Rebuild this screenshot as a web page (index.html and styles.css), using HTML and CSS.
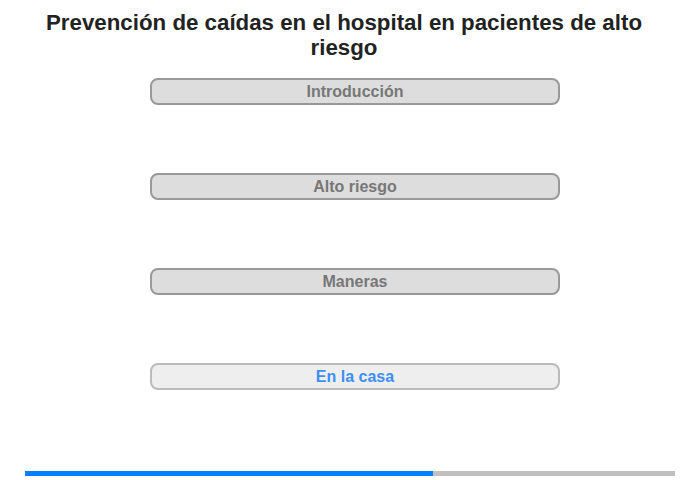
FILE: index.html
```html
<!DOCTYPE html>
<html lang="es">
<head>
  <meta charset="UTF-8">
  <meta name="viewport" content="width=device-width, initial-scale=1.0">
  <title>Prevención de caídas</title>
  <link rel="stylesheet" href="styles.css">
</head>
<body>
  <div class="page">
    <h1 class="title">Prevención de caídas en el hospital en pacientes de alto riesgo</h1>

    <div class="menu">
      <button class="menu-item">Introducción</button>
      <button class="menu-item">Alto riesgo</button>
      <button class="menu-item">Maneras</button>
      <button class="menu-item current">En la casa</button>
    </div>

    <div class="progress">
      <div class="progress-fill" style="width: 62.75%"></div>
    </div>
  </div>
</body>
</html>
```

FILE: styles.css
```css
body {
  margin: 0;
  background-color: #fff;
  font-family: "Liberation Sans", Arial, sans-serif;
}

.page {
  width: 700px;
  height: 480px;
  display: flex;
  flex-direction: column;
  align-items: center;
}

.title {
  box-sizing: border-box;
  width: 100%;
  margin: 10px 0 0;
  padding: 0 52px 0 40px;
  font-size: 22.3px;
  line-height: 25px;
  font-weight: bold;
  color: #222;
  text-align: center;
}

.menu {
  margin: 18px 0 0 10px;
  display: flex;
  flex-direction: column;
  gap: 68px;
}

.menu-item {
  width: 410px;
  height: 27px;
  padding: 0;
  background-color: #ddd;
  border: 2px solid #999;
  border-radius: 8px;
  font-family: "Liberation Sans", Arial, sans-serif;
  font-size: 16px;
  font-weight: bold;
  color: #777;
  cursor: pointer;
}

.menu-item.current {
  background-color: #eee;
  border-color: #bbb;
  color: #3d8ff5;
}

.progress {
  margin-top: auto;
  margin-bottom: 4px;
  width: 650px;
  height: 5px;
  background-color: #c0c0c0;
}

.progress-fill {
  height: 100%;
  background-color: #0080ff;
}
```
